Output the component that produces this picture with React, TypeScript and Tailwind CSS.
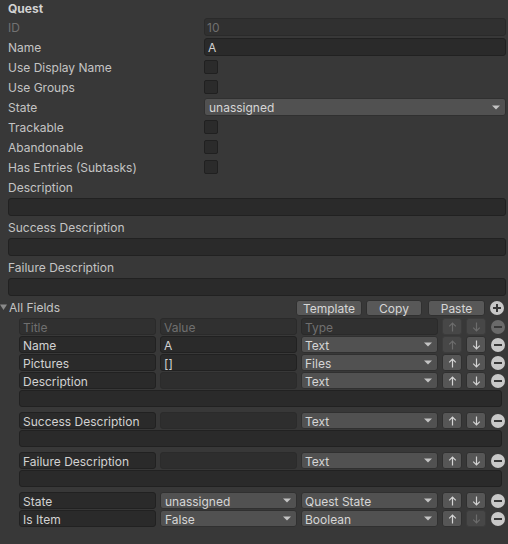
import React from 'react';

const font = "font-['Inter','Liberation_Sans',sans-serif]";

function Caret() {
  return (
    <svg width="8" height="5" viewBox="0 0 8 5" className="shrink-0">
      <path d="M0 0.5h8L4 4.5z" fill="#c4c4c4" />
    </svg>
  );
}

function Arrow({ down, dim }: { down?: boolean; dim?: boolean }) {
  return (
    <svg width="9" height="10" viewBox="0 0 9 10" className={dim ? 'text-[#6c6c6c]' : 'text-[#d4d4d4]'}>
      <path
        d={down ? 'M4.5 0.5V9 M1.2 5.6L4.5 8.9L7.8 5.6' : 'M4.5 9.5V1 M1.2 4.4L4.5 1.1L7.8 4.4'}
        stroke="currentColor"
        strokeWidth="1.2"
        fill="none"
      />
    </svg>
  );
}

function RoundIcon({ plus, dim }: { plus?: boolean; dim?: boolean }) {
  const c = dim ? '#6a6a6a' : '#c8c8c8';
  return (
    <svg width="14" height="14" viewBox="0 0 14 14" className="shrink-0">
      <circle cx="7" cy="7" r="7" fill={c} />
      <rect x="3" y="6" width="8" height="2" fill="#383838" />
      {plus && <rect x="6" y="3" width="2" height="8" fill="#383838" />}
    </svg>
  );
}

// nudges text down a pixel, Unity's labels sit a bit low in their rows
function T({ children }: { children?: React.ReactNode }) {
  return <span className="translate-y-px">{children}</span>;
}

function TextField({ value, disabled, className = '' }: { value?: React.ReactNode; disabled?: boolean; className?: string }) {
  return (
    <div
      className={`flex items-center rounded-[3px] border px-[2px] ${
        disabled ? 'border-[#2a2a2a] bg-[#303030] text-[#6f6f6f]' : 'border-[#212121] bg-[#2a2a2a] text-[#d2d2d2]'
      } ${className}`}
    >
      <T>{value}</T>
    </div>
  );
}

function Dropdown({ value, className = '' }: { value: string; className?: string }) {
  return (
    <div
      className={`flex items-center justify-between rounded-[3px] border border-[#303030] bg-[#515151] pl-[3px] pr-[5px] text-[#d6d6d6] ${className}`}
    >
      <T>{value}</T>
      <Caret />
    </div>
  );
}

function Checkbox() {
  return <div className="h-[14px] w-[14px] rounded-[2px] border border-[#202020] bg-[#2b2b2b]" />;
}

function Row({ label, children, muted }: { label: string; children?: React.ReactNode; muted?: boolean }) {
  return (
    <div className="flex h-[18px] items-center">
      <div className={`flex w-[196px] shrink-0 ${muted ? 'text-[#727272]' : ''}`}>
        <T>{label}</T>
      </div>
      <div className="flex h-full flex-1 items-center">{children}</div>
    </div>
  );
}

function StackedField({ label }: { label: string }) {
  return (
    <>
      <div className="flex h-[18px] items-center">
        <T>{label}</T>
      </div>
      <TextField className="h-[18px]" />
    </>
  );
}

function MoveButton({ down, dim }: { down?: boolean; dim?: boolean }) {
  return (
    <div
      className={`flex h-[17px] w-[20px] shrink-0 items-center justify-center rounded-[3px] border ${
        dim ? 'border-[#3c3c3c] bg-[#474747]' : 'border-[#303030] bg-[#565656]'
      }`}
    >
      <Arrow down={down} dim={dim} />
    </div>
  );
}

type FieldRow = {
  title: React.ReactNode;
  value: React.ReactNode;
  type: React.ReactNode;
  upDim?: boolean;
  downDim?: boolean;
  removeDim?: boolean;
};

function TableRow({ row }: { row: FieldRow }) {
  return (
    <div className="flex h-[17px] items-center">
      <div className="w-[137px] shrink-0">{row.title}</div>
      <div className="ml-[4px] w-[137px] shrink-0">{row.value}</div>
      <div className="ml-[4px] w-[137px] shrink-0">{row.type}</div>
      <div className="ml-[4px]">
        <MoveButton dim={row.upDim} />
      </div>
      <div className="ml-[4px]">
        <MoveButton down dim={row.downDim} />
      </div>
      <div className="ml-[5px] flex">
        <RoundIcon dim={row.removeDim} />
      </div>
    </div>
  );
}

function TitleCell({ text, disabled }: { text: string; disabled?: boolean }) {
  return <TextField value={text} disabled={disabled} className="h-[17px] !px-[3px]" />;
}

function ValueCell({ text, empty }: { text?: string; empty?: boolean }) {
  return (
    <TextField
      value={text}
      className={`h-[17px] !px-[3px] ${empty ? '!border-[#2b2b2b] !bg-[#2e2e2e]' : ''}`}
    />
  );
}

function TypeDrop({ text }: { text: string }) {
  return <Dropdown value={text} className="h-[17px]" />;
}

function TextArea() {
  return <TextField className="h-[17px] w-[483px]" />;
}

function SmallButton({ label, w }: { label: string; w: string }) {
  return (
    <div
      className={`flex h-[16px] ${w} items-center justify-center rounded-[3px] border border-[#303030] bg-[#585858] text-[#d6d6d6]`}
    >
      <T>{label}</T>
    </div>
  );
}

export default function App() {
  return (
    <div className={`${font} h-[544px] w-[508px] overflow-hidden bg-[#383838] text-[12px] leading-none text-[#c4c4c4]`}>
      <div className="flex flex-col gap-[2px] pl-[8px] pr-[2px]">
        <div className="flex h-[16px] items-center font-bold text-[#d2d2d2]">
          <T>Quest</T>
        </div>
        <Row label="ID" muted>
          <TextField value="10" disabled className="h-[18px] w-full" />
        </Row>
        <Row label="Name">
          <TextField value="A" className="h-[18px] w-full !px-[3px]" />
        </Row>
        <Row label="Use Display Name">
          <Checkbox />
        </Row>
        <Row label="Use Groups">
          <Checkbox />
        </Row>
        <Row label="State">
          <Dropdown value="unassigned" className="h-[18px] w-full !pl-[4px]" />
        </Row>
        <Row label="Trackable">
          <Checkbox />
        </Row>
        <Row label="Abandonable">
          <Checkbox />
        </Row>
        <Row label="Has Entries (Subtasks)">
          <Checkbox />
        </Row>
        <StackedField label="Description" />
        <StackedField label="Success Description" />
        <StackedField label="Failure Description" />
      </div>

      <div className="mt-[2px] flex h-[18px] items-end pr-[4px]">
        <div className="flex h-full items-center">
          <svg width="8" height="8" viewBox="0 0 8 8" className="mr-[1px]">
            <path d="M0 1.5h7L3.5 7z" fill="#8a8a8a" />
          </svg>
          <T>All Fields</T>
        </div>
        <div className="ml-auto flex items-center">
          <SmallButton label="Template" w="w-[66px]" />
          <div className="ml-[4px]">
            <SmallButton label="Copy" w="w-[56px]" />
          </div>
          <div className="ml-[6px]">
            <SmallButton label="Paste" w="w-[57px]" />
          </div>
          <div className="mb-[1px] ml-[5px] flex">
            <RoundIcon plus />
          </div>
        </div>
      </div>

      <div className="mt-[2px] flex flex-col gap-[5px] pl-[19px]">
        <div className="flex flex-col gap-[1px]">
          <TableRow
            row={{
              title: <TitleCell text="Title" disabled />,
              value: <TitleCell text="Value" disabled />,
              type: <TitleCell text="Type" disabled />,
              upDim: true,
              downDim: true,
              removeDim: true,
            }}
          />
          <TableRow
            row={{
              title: <TitleCell text="Name" />,
              value: <ValueCell text="A" />,
              type: <TypeDrop text="Text" />,
              upDim: true,
            }}
          />
          <TableRow
            row={{
              title: <TitleCell text="Pictures" />,
              value: <ValueCell text="[]" />,
              type: <TypeDrop text="Files" />,
            }}
          />
          <TableRow
            row={{
              title: <TitleCell text="Description" />,
              value: <ValueCell empty />,
              type: <TypeDrop text="Text" />,
            }}
          />
          <TextArea />
        </div>

        <div className="flex flex-col gap-[1px]">
          <TableRow
            row={{
              title: <TitleCell text="Success Description" />,
              value: <ValueCell empty />,
              type: <TypeDrop text="Text" />,
            }}
          />
          <TextArea />
        </div>

        <div className="flex flex-col gap-[1px]">
          <TableRow
            row={{
              title: <TitleCell text="Failure Description" />,
              value: <ValueCell empty />,
              type: <TypeDrop text="Text" />,
            }}
          />
          <TextArea />
        </div>

        <div className="flex flex-col gap-[1px]">
          <TableRow
            row={{
              title: <TitleCell text="State" />,
              value: <Dropdown value="unassigned" className="h-[17px] !pl-[4px]" />,
              type: <TypeDrop text="Quest State" />,
            }}
          />
          <TableRow
            row={{
              title: <TitleCell text="Is Item" />,
              value: <Dropdown value="False" className="h-[17px] !pl-[4px]" />,
              type: <TypeDrop text="Boolean" />,
              downDim: true,
            }}
          />
        </div>
      </div>
    </div>
  );
}
